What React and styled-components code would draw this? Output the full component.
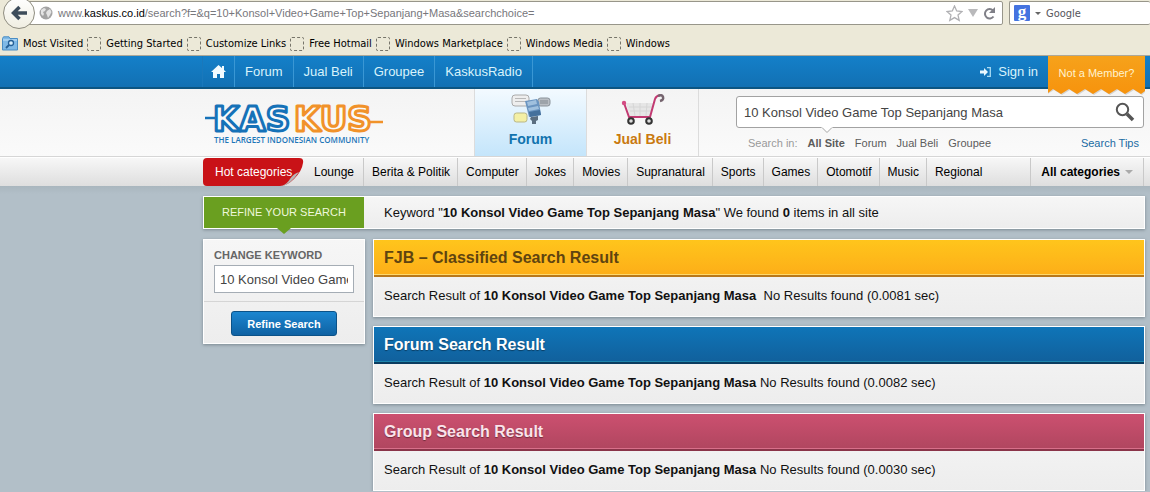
import React from "react";
import styled, { createGlobalStyle, css } from "styled-components";

const Global = createGlobalStyle`
  * { box-sizing: border-box; }
  body {
    margin: 0;
    background: #b2bfc8;
    color: #111;
    font-family: "Liberation Sans", Arial, sans-serif;
    font-size: 13px;
    line-height: 16px;
  }
  a { color: inherit; text-decoration: none; }
  button, input { font-family: inherit; margin: 0; }
  h2, p { margin: 0; padding: 0; }
  svg { display: block; flex: none; }
`;

/* Browser chrome */
const Browser = styled.header`
  background: #ece9d8;
  border-bottom: 1px solid #aca899;
  font-family: "DejaVu Sans Condensed", Tahoma, sans-serif;
  font-size: 11px;
  color: #000;
`;
const AddressRow = styled.div`
  display: flex;
  height: 32px;
  padding-top: 1px;
  align-items: flex-start;
`;
const BackButton = styled.button`
  width: 32px;
  height: 32px;
  margin: -4px -8px 0 3px;
  padding: 0;
  border: 1px solid #8f8d80;
  border-radius: 50%;
  background: linear-gradient(#fff, #f0eee2);
  position: relative;
  z-index: 1;
  display: grid;
  place-items: center;
  flex: none;
`;
const Field = styled.div`
  display: flex;
  align-items: center;
  height: 24px;
  background: #fff;
  border: 1px solid #98968a;
  border-radius: 2px;
  flex: ${(p) => (p.$grow ? "1" : "none")};
  min-width: 0;
`;
const Address = styled(Field)`
  padding: 0 6px 0 11px;
  gap: 5px;
  color: #77777c;
  font-family: "Liberation Sans", Arial, sans-serif;
  b { font-weight: 400; color: #000; }
  span { flex: 1; white-space: nowrap; }
`;
const Engine = styled(Field)`
  width: 141px;
  margin-left: 6px;
  border-right: 0;
  padding-left: 4px;
  gap: 5px;
  input {
    flex: 1;
    min-width: 0;
    border: 0;
    padding: 0;
    font-size: 11px;
    background: none;
    color: #55555a;
    &::placeholder { color: #55555a; opacity: 1; }
  }
`;
const Bookmarks = styled.nav`
  display: flex;
  height: 23px;
  align-items: center;
  padding-left: 2px;
  gap: 4px;
  a { display: flex; align-items: center; gap: 5px; white-space: nowrap; }
`;
const Blank = styled.i`
  width: 14px;
  height: 14px;
  border: 1px dashed #77756a;
  border-radius: 2px;
`;

/* Shared page column */
const inset = css`
  padding-left: 203px;
  padding-right: 5px;
`;

const TopBar = styled.nav`
  ${inset}
  display: flex;
  height: 33px;
  background: linear-gradient(#1480c9, #1270b3);
  border-bottom: 2px solid #0c5582;
  color: #d9f3fb;
`;
const TopLink = styled.a`
  display: flex;
  align-items: center;
  gap: 7px;
  padding: 0 10px;
  border-right: ${(p) => (p.$plain ? "0" : "1px solid #3a97d4")};
  margin-left: ${(p) => (p.$end ? "auto" : "0")};
`;
const HomeLink = styled(TopLink)`
  padding: 0 8px;
  box-shadow: -1px 0 #1a78bb;
`;
const Member = styled.a`
  position: relative;
  width: 97px;
  height: 41px;
  z-index: 2;
  color: #fff3cf;
  font-size: 11px;
  text-align: center;
  line-height: 34px;
  svg { position: absolute; inset: 0; z-index: -1; }
`;

const Masthead = styled.div`
  ${inset}
  display: flex;
  height: 68px;
  background: linear-gradient(#f4f4f4, #fafafa);
  border-bottom: 1px solid #d6d6d6;
`;
const LogoLink = styled.a`
  width: 271px;
  padding-top: 15px;
`;
const Tab = styled.a`
  width: 112px;
  display: flex;
  flex-direction: column;
  align-items: center;
  justify-content: space-between;
  padding: 4px 0 9px;
  border-left: 1px solid #dcdcdc;
  font-size: 14px;
  font-weight: 700;
  color: ${(p) => (p.$active ? "#1173ae" : "#c97a10")};
  background: ${(p) => (p.$active ? "linear-gradient(#f3faff, #c4e5fb)" : "none")};
`;
const SearchArea = styled.form`
  flex: 1;
  border-left: 1px solid #dcdcdc;
  padding: 7px 1px 0 37px;
`;
const SearchBox = styled.div`
  display: flex;
  align-items: center;
  height: 32px;
  position: relative;
  background: #fff;
  border: 1px solid #a2a2a2;
  border-radius: 3px;
  padding-right: 8px;
  input {
    flex: 1;
    border: 0;
    background: none;
    padding: 0 7px;
    font-size: 13px;
    color: #444;
  }
  button { border: 0; background: none; padding: 0; }
`;
const Pointer = styled.svg`
  position: absolute;
  left: 84px;
  top: 30px;
`;
const Scopes = styled.div`
  display: flex;
  gap: 10px;
  padding: 7px 5px 0 12px;
  font-size: 11px;
  color: #5c5c5c;
  span { color: #999; }
  a:last-child { margin-left: auto; color: #1a6ba3; }
`;

const Categories = styled.nav`
  ${inset}
  display: flex;
  height: 29px;
  background: linear-gradient(#f7f7f7, #dedede);
  font-size: 12px;
  color: #000;
  border-top: 1px solid #fff;
`;
const Hot = styled.a`
  position: relative;
  z-index: 0;
  width: 100px;
  padding-left: 12px;
  line-height: 29px;
  color: #fff;
  svg { position: absolute; left: 0; top: 0; z-index: -1; }
`;
const Category = styled.a`
  display: flex;
  align-items: center;
  padding: 0 7px 0 8px;
  white-space: nowrap;
  border-right: ${(p) => (p.$last ? "0" : "1px solid #c9c9c9")};
  &:nth-child(2) { padding: 0 9px 0 11px; }
`;
const AllCategories = styled(Category)`
  margin-left: auto;
  margin-right: 1px;
  padding: 0 10px;
  gap: 5px;
  font-weight: 700;
  border-left: 1px solid #c9c9c9;
`;

const Main = styled.main`
  ${inset}
  padding-top: 10px;
  background: linear-gradient(#a9b6be, #b2bfc8 8px);
`;
const panel = css`
  background: linear-gradient(#f6f6f6, #ededed);
  border: 1px solid #fff;
  box-shadow: 0 1px 3px #7b8890;
`;
const Summary = styled.div`
  ${panel}
  display: flex;
  height: 33px;
  align-items: center;
`;
const RefineTitle = styled.h2`
  position: relative;
  width: 160px;
  line-height: 31px;
  background: #6a9f20;
  color: #eff8dc;
  font-size: 11px;
  font-weight: 400;
  text-align: center;
  &::after {
    content: "";
    position: absolute;
    left: 73px;
    top: 31px;
    border: 7px solid transparent;
    border-top: 6px solid #6a9f20;
    border-bottom: 0;
  }
`;
const Keyword = styled.p`
  padding-left: 20px;
`;
const Columns = styled.div`
  display: flex;
  align-items: flex-start;
  gap: 8px;
  margin-top: 10px;
`;
const Refine = styled.form`
  ${panel}
  width: 162px;
  label {
    display: block;
    padding: 7px 10px 2px;
    font-size: 11px;
    font-weight: 700;
    color: #666;
  }
  input {
    display: block;
    width: 140px;
    height: 28px;
    margin: 0 10px 8px;
    padding: 0 5px;
    border: 1px solid #a5adb5;
    font-size: 13px;
    color: #444;
    background: #fff;
  }
`;
const Action = styled.div`
  display: flex;
  justify-content: center;
  border-top: 1px solid #d5d5d5;
  padding: 9px 0 7px;
  button {
    width: 106px;
    height: 25px;
    padding: 0;
    border: 1px solid #0b5288;
    border-radius: 3px;
    background: linear-gradient(#1c86d0, #0f62a3);
    color: #fff;
    font-size: 11px;
    font-weight: 700;
  }
`;
const Results = styled.div`
  flex: 1;
  display: flex;
  flex-direction: column;
  gap: 9px;
`;
const tones = {
  gold: ["#ffc51c", "#fdae18", "#b9781b", "#fdd96d", "#5f4410"],
  blue: ["#0f75b8", "#11609c", "#0b3c60", "#1f86ad", "#fff"],
  rose: ["#cc5070", "#b0465f", "#8a3449", "#d8708a", "#fbe3ea"],
};
const Card = styled.section`
  ${panel}
  h2 {
    height: 37px;
    padding: 0 10px;
    font-size: 16px;
    line-height: 35px;
    color: ${(p) => tones[p.$tone][4]};
    background: linear-gradient(${(p) => tones[p.$tone][0]}, ${(p) => tones[p.$tone][1]});
    border-bottom: 2px solid ${(p) => tones[p.$tone][2]};
    box-shadow: inset 0 -1px ${(p) => tones[p.$tone][3]};
    text-shadow: ${(p) => (p.$tone === "gold" ? "none" : "0 1px 1px #0006")};
  }
  p { padding: 11px 10px 12px; white-space: pre-wrap; }
`;

const QUERY = "10 Konsol Video Game Top Sepanjang Masa";
const results = [
  { tone: "gold", title: "FJB – Classified Search Result", time: "0.0081", gap: "  " },
  { tone: "blue", title: "Forum Search Result", time: "0.0082", gap: " " },
  { tone: "rose", title: "Group Search Result", time: "0.0030", gap: " " },
];
const bookmarks = ["Getting Started", "Customize Links", "Free Hotmail", "Windows Marketplace", "Windows Media", "Windows"];
const categories = ["Lounge", "Berita & Politik", "Computer", "Jokes", "Movies", "Supranatural", "Sports", "Games", "Otomotif", "Music", "Regional"];

const BackIcon = () => (
  <svg width="18" height="18" viewBox="0 0 18 18" fill="none" stroke="#3d4c5a" strokeWidth="3.5">
    <path d="M9.500 3 3.500 9 9.500 15M3.500 9H17" />
  </svg>
);
const GlobeIcon = () => (
  <svg width="14" height="14" viewBox="0 0 14 14">
    <circle cx="7" cy="7" r="6.5" fill="#a3a3a3" />
    <path d="M2 4 5 2l2 1-1 2-2 1 1 2-1 2-2-2zM8 5l3-2 1.5 3L11 9l-2 3-1-3-1-2z" fill="#e4e4e4" />
  </svg>
);
const StarIcon = () => (
  <svg width="17" height="17" viewBox="0 0 17 17" fill="#fff" stroke="#b0b0b3" strokeWidth="1.3">
    <path d="m8.500 1 2.200 5 5.300.500-4 3.600 1.200 5.300-4.700-2.800-4.700 2.800L5 10.100 1 6.500 6.300 6z" />
  </svg>
);
const Triangle = ({ w, h, color }) => (
  <svg width={w} height={h} viewBox="0 0 10 6" preserveAspectRatio="none"><path d="M0 0h10L5 6z" fill={color} /></svg>
);
const ReloadIcon = () => (
  <svg width="13" height="13" viewBox="0 0 13 13" fill="none" stroke="#808088" strokeWidth="2">
    <path d="M10 3.500A4.700 4.700 0 1 0 10.500 9.500" /><path d="M12 0v6H6z" fill="#808088" stroke="none" />
  </svg>
);
const GoogleIcon = () => (
  <svg width="16" height="16" viewBox="0 0 16 16" overflow="visible">
    <rect width="16" height="16" rx="1" fill="#4473e0" />
    <text x="8" y="12" textAnchor="middle" fontFamily="Liberation Serif" fontWeight="700" fontSize="17" fill="#fff">g</text>
  </svg>
);
const FolderIcon = () => (
  <svg width="16" height="15" viewBox="0 0 16 15">
    <path d="M.5 2.500V14h15V2.500H8L7 .8H1.500z" fill="#7fb9e6" stroke="#4a8dc4" />
    <path d="M1 4h14" stroke="#c8e4f8" />
    <circle cx="9" cy="7" r="2.500" fill="#d8effc" stroke="#245f96" strokeWidth="1.300" />
    <path d="m7 9-3 3" stroke="#245f96" strokeWidth="1.800" />
  </svg>
);
const HomeIcon = () => (
  <svg width="15" height="13" viewBox="0 0 15 13" fill="#f2fbff">
    <path d="M7.500 0 0 7h2v6h4V9h3v4h4V7h2l-2-2V1h-2v2z" />
  </svg>
);
const SignInIcon = () => (
  <svg width="11" height="10" viewBox="0 0 11 10">
    <path d="M0 3.500h4V1l4 4-4 4V6.500H0z" fill="#e8f8ff" />
    <path d="M7 .7h3.300v8.600H7" fill="none" stroke="#a9dbf3" strokeWidth="1.300" />
  </svg>
);
const Ribbon = () => (
  <svg width="97" height="41" viewBox="0 0 97 41">
    <defs><linearGradient id="rb" x2="0" y2="1"><stop stopColor="#f6a21b" /><stop offset="1" stopColor="#f7930d" /></linearGradient></defs>
    <path d="M0 0H97V36l-3 3-8-5-8 5-8-5-8 5-8-5-8 5-8-5-8 5-8-5-8 5-8-5-8 5-3-3z" fill="#0002" />
    <path d="M0 0H97V35l-4 3-8-5-8 5-8-5-8 5-8-5-8 5-8-5-8 5-8-5-8 5-8-5-5 4z" fill="url(#rb)" />
  </svg>
);
const Logo = () => (
  <svg width="182" height="42" viewBox="0 0 182 42" overflow="visible" role="img" aria-label="Kaskus">
    <path d="M2 14h10" stroke="#1672b8" strokeWidth="2.500" />
    <path d="M166 18h14" stroke="#f1922a" strokeWidth="2.500" />
    <g fontFamily="DejaVu Sans" fontWeight="700" fontSize="34" strokeWidth="3" fill="#fafafa" strokeLinejoin="round">
      <text x="10" y="27" stroke="#1672b8">KAS</text>
      <text x="91" y="27" stroke="#f1922a">KUS</text>
    </g>
    <text x="11" y="39" fontFamily="Open Sans" fontWeight="600" fontSize="8" fill="#1d76b8">THE LARGEST INDONESIAN COMMUNITY</text>
  </svg>
);
const ForumIcon = () => (
  <svg width="40" height="33" viewBox="0 0 40 33">
    <rect x="1" y="2" width="17" height="11" rx="3" fill="#eee" stroke="#aaa" />
    <path d="M4 5.500h11M4 8.500h11" stroke="#b8b8b8" />
    <rect x="27" y="5" width="12" height="8" rx="2.500" fill="#b9bec4" stroke="#8b939a" />
    <path d="M29 8h8M29 10h8" stroke="#818990" />
    <rect x="3" y="20" width="13" height="9" rx="2.500" fill="#f4f0a5" stroke="#b9b787" />
    <path d="m14 8 12-2 2 3 2 13-12 2z" fill="#6a94c0" />
    <path d="m16 9 9-2 1 4-9 2zM17 15l10-2 1 3-10 2z" fill="#a0c0de" />
    <path d="m18 19 11-2 1 5-11 2z" fill="#44709c" />
    <path d="m20 24 7-1v4l-2 1v3h-4v-3l-2-2z" fill="#5b6e80" />
  </svg>
);
const CartIcon = () => (
  <svg width="44" height="33" viewBox="0 0 44 33" fill="none">
    <path d="M5 10h28l-3 14H9z" fill="#e6e6e6" />
    <path d="M8 14h24M9 18h21M12 10l2 13M19 10v13M26 10l-1 13" stroke="#d6d6d6" />
    <path d="M3 10l5 14h21l5-18q1-3 5-4" stroke="#c23a72" strokeWidth="2" />
    <path d="M37 3q4-2 5 1t-3 4" stroke="#75646e" strokeWidth="2.500" />
    <circle cx="3" cy="10" r="2.200" fill="#d44b83" />
    <circle cx="10" cy="28" r="2.800" fill="#ddd" stroke="#333" strokeWidth="2" />
    <circle cx="28" cy="28" r="2.800" fill="#ddd" stroke="#333" strokeWidth="2" />
  </svg>
);
const MagnifierIcon = () => (
  <svg width="20" height="20" viewBox="0 0 20 20" fill="none" stroke="#555">
    <circle cx="7.500" cy="7.500" r="5.700" strokeWidth="2" />
    <path d="m12 12 6 6" strokeWidth="3.600" />
  </svg>
);
const HotShape = () => (
  <svg width="101" height="28" viewBox="0 0 101 28">
    <path d="M4 0h92q5 0 4 5-1 8-9 16-7 7-14 7H4q-4 0-4-4V4q0-4 4-4z" fill="#c91217" />
    <path d="M96 14Q90 16 87 21t-8 7q8-1 17-14z" fill="#b8b8b8" />
  </svg>
);

export default function App() {
  return (
    <>
      <Global />
      <Browser>
        <AddressRow>
          <BackButton aria-label="Back"><BackIcon /></BackButton>
          <Address $grow>
            <GlobeIcon />
            <span>www.<b>kaskus.co.id</b>/search?f=&amp;q=10+Konsol+Video+Game+Top+Sepanjang+Masa&amp;searchchoice=</span>
            <StarIcon />
            <Triangle w={10} h={8} color="#b9b9bb" />
            <ReloadIcon />
          </Address>
          <Engine>
            <GoogleIcon />
            <Triangle w={6} h={3} color="#666" />
            <input aria-label="Search engine" placeholder="Google" />
          </Engine>
        </AddressRow>
        <Bookmarks>
          <a href="#"><FolderIcon />Most Visited</a>
          {bookmarks.map((b) => <a href="#" key={b}><Blank />{b}</a>)}
        </Bookmarks>
      </Browser>

      <TopBar>
        <HomeLink href="#" aria-label="Home"><HomeIcon /></HomeLink>
        <TopLink href="#">Forum</TopLink>
        <TopLink href="#">Jual Beli</TopLink>
        <TopLink href="#">Groupee</TopLink>
        <TopLink href="#">KaskusRadio</TopLink>
        <TopLink href="#" $plain $end><SignInIcon />Sign in</TopLink>
        <Member href="#"><Ribbon />Not a Member?</Member>
      </TopBar>

      <Masthead>
        <LogoLink href="#"><Logo /></LogoLink>
        <Tab href="#" $active><ForumIcon />Forum</Tab>
        <Tab href="#"><CartIcon />Jual Beli</Tab>
        <SearchArea>
          <SearchBox>
            <input aria-label="Search" defaultValue={QUERY} />
            <button type="button" aria-label="Search"><MagnifierIcon /></button>
            <Pointer width="12" height="7" viewBox="0 0 12 7">
              <path d="M0 0h12L6 6z" fill="#fff" /><path d="m1 .5 5 5 5-5" fill="none" stroke="#a2a2a2" />
            </Pointer>
          </SearchBox>
          <Scopes>
            <span>Search in:</span>
            <a href="#"><b>All Site</b></a>
            <a href="#">Forum</a>
            <a href="#">Jual Beli</a>
            <a href="#">Groupee</a>
            <a href="#">Search Tips</a>
          </Scopes>
        </SearchArea>
      </Masthead>

      <Categories>
        <Hot href="#"><HotShape />Hot categories</Hot>
        {categories.map((c) => <Category href="#" key={c} $last={c === "Regional"}>{c}</Category>)}
        <AllCategories href="#">All categories<Triangle w={8} h={4} color="#aaa" /></AllCategories>
      </Categories>

      <Main>
        <Summary>
          <RefineTitle>REFINE YOUR SEARCH</RefineTitle>
          <Keyword>Keyword "<b>{QUERY}</b>" We found <b>0</b> items in all site</Keyword>
        </Summary>
        <Columns>
          <Refine>
            <label htmlFor="keyword">CHANGE KEYWORD</label>
            <input id="keyword" defaultValue={QUERY} />
            <Action><button type="button">Refine Search</button></Action>
          </Refine>
          <Results>
            {results.map((r) => (
              <Card key={r.title} $tone={r.tone}>
                <h2>{r.title}</h2>
                <p>Search Result of <b>{QUERY}</b>{r.gap}No Results found ({r.time} sec)</p>
              </Card>
            ))}
          </Results>
        </Columns>
      </Main>
    </>
  );
}
